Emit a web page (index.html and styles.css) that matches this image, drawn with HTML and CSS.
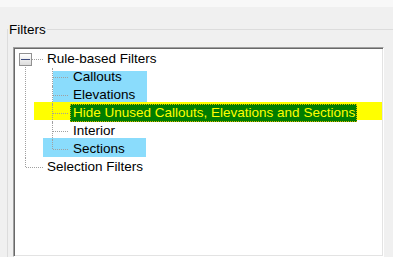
FILE: index.html
```html
<!DOCTYPE html>
<html>
<head>
<meta charset="utf-8">
<link rel="stylesheet" href="styles.css">
</head>
<body>
<div class="topbar"></div>
<fieldset class="group">
  <legend class="group-title">Filters</legend>
  <div class="tree">
    <span class="mark mark-blue mark-callouts"></span>
    <span class="mark mark-yellow mark-hide"></span>
    <span class="mark mark-blue mark-sections"></span>
    <ul class="level root">
      <li class="node">
        <span class="expander"></span>
        <span class="label">Rule-based Filters</span>
        <ul class="level children">
          <li class="node"><span class="label">Callouts</span></li>
          <li class="node"><span class="label">Elevations</span></li>
          <li class="node"><span class="label selected">Hide Unused Callouts, Elevations and Sections</span></li>
          <li class="node"><span class="label">Interior</span></li>
          <li class="node last"><span class="label">Sections</span></li>
        </ul>
      </li>
      <li class="node last"><span class="label">Selection Filters</span></li>
    </ul>
  </div>
</fieldset>
</body>
</html>
```

FILE: styles.css
```css
html, body {
  margin: 0;
  padding: 0;
}
body {
  width: 393px;
  height: 257px;
  overflow: hidden;
  background: #f0f0f0;
  font-family: "Liberation Sans", Arial, sans-serif;
  font-size: 13.5px;
  color: #000;
}
.topbar {
  height: 7px;
  background: #f8f8f8;
}
.group {
  margin: 14px 0 0 7px;
  padding: 0;
  border: 1px solid #dcdcdc;
  border-right: none;
  border-bottom: none;
  min-inline-size: 0;
}
.group-title {
  padding: 0 1px;
  margin: 0;
  line-height: 17px;
  font-size: 13.5px;
}
.tree {
  position: relative;
  margin: 9px 0 0 5px;
  width: 371px;
  height: 210px;
  box-sizing: border-box;
  padding-top: 1px;
  background: #fff;
  border: 1px solid;
  border-color: #a0a0a0 #ffffff #ffffff #a0a0a0;
  box-shadow: inset 1px 1px 0 #696969, inset -1px -1px 0 #e3e3e3;
}
.mark {
  position: absolute;
  z-index: 0;
}
.mark-blue { background: #8adcfc; }
.mark-yellow { background: #ffff00; }
.mark-callouts { left: 39px; top: 23px; width: 94px; height: 31px; }
.mark-hide { left: 20px; top: 54px; width: 348px; height: 18px; }
.mark-sections { left: 29px; top: 90px; width: 103px; height: 19px; }

.level {
  list-style: none;
  margin: 0;
  padding: 0;
  position: relative;
  z-index: 1;
}
.root {
  padding-top: 0.5px;
}
.root > .node {
  padding-left: 30px;
}
.children {
  padding-left: 26px;
  padding-top: 0;
}
.node {
  position: relative;
  line-height: 18px;
  white-space: nowrap;
}
.label {
  display: inline-block;
  height: 18px;
  padding: 0 2px 0 3px;
  vertical-align: top;
}
.label.selected {
  background: #007d00;
  color: #ffff00;
  outline: 1px dotted #d8b400;
  outline-offset: -1px;
}
/* connector lines */
.node::before,
.node::after {
  content: "";
  position: absolute;
}
.root > .node::before {
  left: 12px;
  top: 9px;
  width: 17px;
  border-top: 1px dotted #a0a0a0;
}
.root > .node::after {
  left: 11px;
  top: 9px;
  bottom: 0;
  border-left: 1px dotted #a0a0a0;
}
.root > .node.last::after {
  top: 0;
  bottom: auto;
  height: 9px;
}
.children > .node::before {
  left: -17px;
  top: 9px;
  width: 15px;
  border-top: 1px dotted #a0a0a0;
}
.children > .node::after {
  left: -18px;
  top: 0;
  bottom: 0;
  border-left: 1px dotted #a0a0a0;
}
.children > .node.last::after {
  bottom: auto;
  height: 9px;
}
.expander {
  position: absolute;
  z-index: 2;
  left: 5px;
  top: 3px;
  width: 11px;
  height: 11px;
  border: 1px solid #919191;
  background: linear-gradient(#ffffff, #dcdcdc);
}
.expander::before {
  content: "";
  position: absolute;
  left: 1px;
  top: 5px;
  width: 9px;
  height: 1px;
  background: #3c4a7c;
}
```
